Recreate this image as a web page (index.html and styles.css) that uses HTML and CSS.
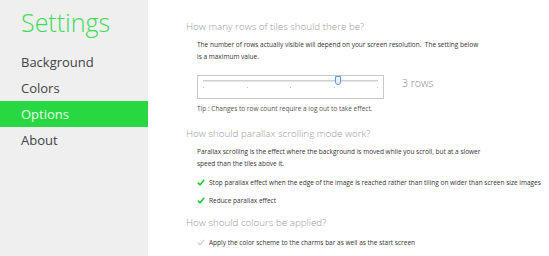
FILE: index.html
```html
<!DOCTYPE html>
<html lang="en">
<head>
    <meta charset="UTF-8">
    <title>Settings</title>
    <link rel="stylesheet" href="styles.css">
</head>
<body>
    <div class="page">
        <div class="sidebar">
            <h1>Settings</h1>
            <ul class="nav">
                <li>Background</li>
                <li>Colors</li>
                <li class="active">Options</li>
                <li>About</li>
            </ul>
        </div>

        <div class="content">
            <h2>How many rows of tiles should there be?</h2>
            <p class="desc">The number of rows actually visible will depend on your screen resolution.&nbsp; The setting below<br>is a maximum value.</p>

            <div class="slider-row">
                <div class="slider">
                    <div class="track"></div>
                    <div class="thumb"></div>
                    <div class="ticks">
                        <span></span><span></span><span></span><span></span><span></span>
                    </div>
                </div>
                <span class="value">3 rows</span>
            </div>
            <p class="tip">Tip : Changes to row count require a log out to take effect.</p>

            <h2>How should parallax scrolling mode work?</h2>
            <p class="desc">Parallax scrolling is the effect where the background is moved while you scroll, but at a slower<br>speed than the tiles above it.</p>

            <div class="check on first">
                <svg width="8" height="7" viewBox="0 0 8 7"><path d="M0.8 3.6 L3 5.8 L7.2 0.8" fill="none" stroke="currentColor" stroke-width="1.6"/></svg>
                <span>Stop parallax effect when the edge of the image is reached rather than tiling on wider than screen size images</span>
            </div>
            <div class="check on">
                <svg width="8" height="7" viewBox="0 0 8 7"><path d="M0.8 3.6 L3 5.8 L7.2 0.8" fill="none" stroke="currentColor" stroke-width="1.6"/></svg>
                <span>Reduce parallax effect</span>
            </div>

            <h2 class="colours">How should colours be applied?</h2>
            <div class="check off">
                <svg width="8" height="7" viewBox="0 0 8 7"><path d="M0.8 3.6 L3 5.8 L7.2 0.8" fill="none" stroke="currentColor" stroke-width="1.2"/></svg>
                <span>Apply the color scheme to the charms bar as well as the start screen</span>
            </div>
        </div>
    </div>
</body>
</html>
```

FILE: styles.css
```css
body {
    margin: 0;
    font-family: 'Open Sans', 'Noto Sans', sans-serif;
    background: white;
    color: #333;
}
.page {
    display: flex;
    height: 256px;
    overflow: hidden;
}
.sidebar {
    width: 148px;
    flex-shrink: 0;
    background: #efefef;
}
.sidebar h1 {
    margin: 5px 0 0 0;
    padding-left: 21px;
    font-size: 25px;
    font-weight: 300;
    color: #3ddc55;
    height: 44px;
}
.nav {
    list-style: none;
    margin: 0;
    padding: 0;
}
.nav li {
    height: 26px;
    line-height: 26px;
    padding-left: 21px;
    font-size: 13px;
    color: #444;
}
.nav li.active {
    background: #27d843;
    color: #eafbe9;
}
.content {
    padding: 18px 0 0 38px;
    white-space: nowrap;
}
h2 {
    margin: 0;
    font-size: 9.8px;
    font-weight: 300;
    color: #999;
    height: 18px;
    line-height: 18px;
}
h2.colours {
    margin-top: 8px;
}
.desc {
    margin: 3px 0 0 11px;
    font-size: 6.5px;
    line-height: 12px;
    color: #333;
}
.slider-row {
    display: flex;
    align-items: center;
    margin: 12px 0 0 11px;
}
.slider {
    position: relative;
    width: 185px;
    height: 22px;
    border: 1px solid #c8c8c8;
}
.track {
    margin: 4px 5px 0 5px;
    height: 1px;
    background: #d0d0d0;
    border-bottom: 1px solid #e6e6e6;
}
.thumb {
    position: absolute;
    left: 137px;
    top: 0px;
    width: 4px;
    height: 7px;
    border: 1px solid #5a9be0;
    border-radius: 0 0 3px 3px;
    background: #e8f2fc;
}
.ticks {
    display: flex;
    justify-content: space-between;
    margin: 5px 5px 0 5px;
}
.ticks span {
    width: 1px;
    height: 1px;
    background: #bbb;
}
.value {
    margin-left: 18px;
    margin-top: -9px;
    font-size: 10.5px;
    font-weight: 300;
    color: #888;
}
.tip {
    margin: 4px 0 10px 11px;
    font-size: 6.5px;
    line-height: 12px;
    color: #555;
}
.check {
    display: flex;
    align-items: center;
    gap: 4px;
    margin: 0 0 6px 11px;
    height: 12px;
    font-size: 6.5px;
}
.check.first {
    margin-top: 6px;
}
.check.on svg {
    color: #20c83a;
}
.check.off svg {
    color: #ccc;
}
h2.colours + .check {
    margin-top: 4px;
}
```
